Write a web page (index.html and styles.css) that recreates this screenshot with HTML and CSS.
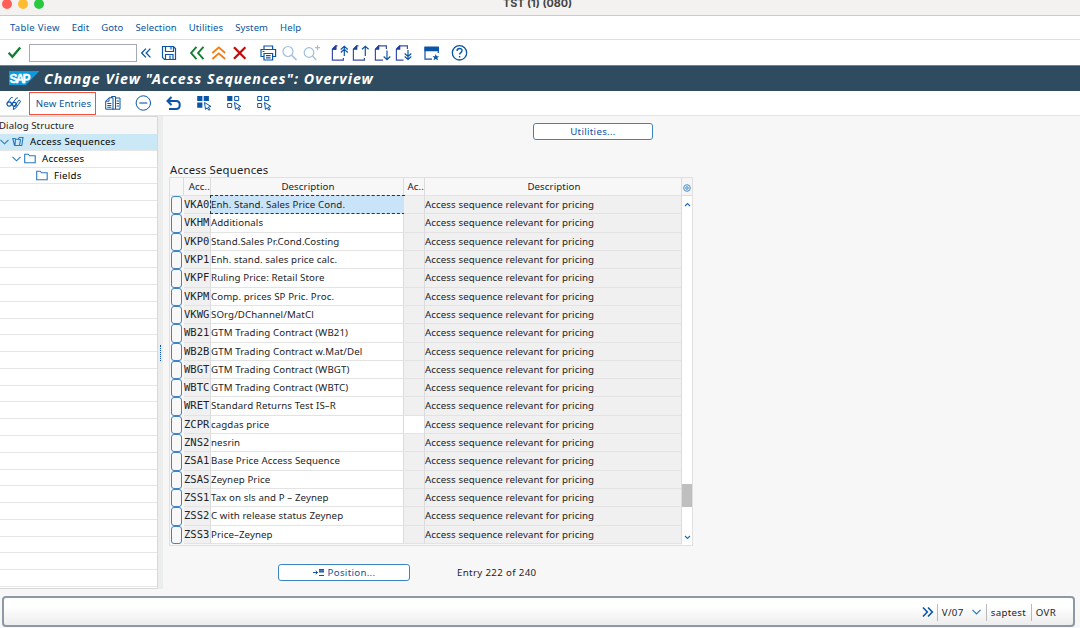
FILE: index.html
```html
<!DOCTYPE html>
<html lang="en">

<head>
    <meta charset="utf-8">
    <meta name="viewport" content="width=device-width, initial-scale=1.0">
    <title>TST (1) (080)</title>
    <link rel="stylesheet" href="styles.css">
</head>

<body>

    <header class="titlebar">
        <div class="lights"><span class="red"></span><span class="yellow"></span><span class="green"></span></div>
        <p>TST (1) (080)</p>
    </header>

    <nav class="menu">
        <a>Table View</a>
        <a>Edit</a>
        <a>Goto</a>
        <a>Selection</a>
        <a>Utilities</a>
        <a>System</a>
        <a>Help</a>
    </nav>

    <div class="toolbar">
        <svg class="enter" width="14" height="20" viewBox="0 0 14 20"><path d="M.6 9.800l3.800 4L12.200 4.400" stroke="#107e2e" stroke-width="2.3" /></svg>
        <input class="command" type="text">
        <svg class="collapse" width="12" height="20" viewBox="0 0 12 20"><path d="M4.900 5.600L.7 10l4.200 4.400M9.400 5.600L5.200 10l4.200 4.400" stroke-width="1.3" /></svg>
        <svg class="save" width="16" height="20" viewBox="0 0 16 20"><path d="M1.500 3.500h11l2 2v11h-11l-2-2zM4.500 3.500v5h8v-5M4.500 16.5v-5h7.500v5M9 12.5v4M10 3.500v3" stroke-width="1.2" /></svg>
        <div class="group">
            <svg viewBox="0 0 21.6 20"><path d="M9.500 3.800L4.100 10l5.400 6.200M16.500 3.800L11.100 10l5.400 6.200" stroke="#107e2e" stroke-width="1.9" /></svg>
            <svg viewBox="0 0 21.6 20"><path d="M3.400 10l6.400-5.600 6.400 5.600M3.400 16l6.400-5.600 6.400 5.600" stroke="#f57c14" stroke-width="1.9" /></svg>
            <svg viewBox="0 0 21.6 20"><path d="M4 4.200l11.400 11.600M15.400 4.200L4 15.800" stroke="#c40a0a" stroke-width="2.3" /></svg>
        </div>
        <div class="group">
            <svg viewBox="0 0 21.6 20"><path d="M6 6.500V3h8.600v3.500M5.800 13.500H3v-7h14.600v7h-2.800M6 10.500h8.600v6.500H6zM8 12.700h4.600M8 14.800h4.600M4.500 8.500h2" stroke-width="1.2" /></svg>
            <svg class="faded" viewBox="0 0 21.6 20"><circle cx="9" cy="8.500" r="5" /><path d="M12.700 12.200l4.800 4.800" stroke-width="1.6" /></svg>
            <svg class="faded" viewBox="0 0 21.6 20"><circle cx="8" cy="9.500" r="4.800" /><path d="M11.500 13l3.800 4M14 4.700h5M16.500 2.200v5" /></svg>
        </div>
        <div class="group pages">
            <svg viewBox="0 0 21.6 20"><path class="page" d="M8.500 2.800H6.800L3.400 6.200v11h11V15M3.400 6.200h3.400V2.800" /><path class="corner" d="M3 6.700V6l3.500-3.700h.8v4.400z" /><path d="M15.300 13V3.400M11.800 6.500l3.500-3.100 3.500 3.100M11.800 9.500l3.500-3.100 3.500 3.100" /></svg>
            <svg viewBox="0 0 21.6 20"><path class="page" d="M8.500 2.800H6.800L3.400 6.200v11h11V15" /><path class="corner" d="M3 6.700V6l3.500-3.700h.8v4.400z" /><path d="M15.300 13V3.200M12 6.300l3.300-3.100 3.300 3.100" /></svg>
            <svg viewBox="0 0 21.6 20"><path class="page" d="M11 17.200H3.400v-11l3.400-3.400h7.600V6" /><path class="corner" d="M3 6.700V6l3.500-3.700h.8v4.400z" /><path d="M15 7.500v9.200M11.700 13.500l3.300 3.200 3.300-3.200" /></svg>
            <svg viewBox="0 0 21.6 20"><path class="page" d="M10.500 17.200H3.400v-11l3.400-3.400h7.600V6" /><path class="corner" d="M3 6.700V6l3.500-3.700h.8v4.400z" /><path d="M15 7v9.500M11.700 10.500l3.300 3 3.300-3M11.700 13.500l3.300 3 3.300-3" /></svg>
        </div>
        <div class="group">
            <svg viewBox="0 0 21.6 20"><path d="M11 16.200H4V4.500h13.300V10" /><path class="solid" d="M3.500 3.500h14.300v4.700H3.500zM14.800 11l.9 2.200h2.500l-1.900 1.600.8 2.500-2.300-1.400-2.300 1.400.8-2.500-1.900-1.600h2.500z" /></svg>
        </div>
        <div class="group">
            <svg viewBox="0 0 21.6 20"><circle cx="10.500" cy="9.800" r="7.200" stroke-width="1.3" /><path d="M8.100 8c0-3.200 5-3.200 5-.4 0 2-2.500 2-2.500 4M10.600 13v1.500" stroke-width="1.4" /></svg>
        </div>
    </div>

    <div class="heading">
        <svg class="logo" width="31" height="15" viewBox="0 0 31 15">
            <path d="M0 0h30.500L17 14H0z" fill="#0a9ae0" stroke="none" />
            <text x="0.500" y="11.500" textLength="21">SAP</text>
        </svg>
        <h1>Change View "Access Sequences": Overview</h1>
    </div>

    <div class="actions">
        <svg class="display" width="18" height="20" viewBox="0 0 18 20"><circle cx="3.200" cy="11" r="2.200" /><circle cx="8.300" cy="11.300" r="2" /><path d="M1.200 10l4-5.500h1.500M6.800 9.800L10.500 5h1.500M7.200 16.500l.6-2.500 5.200-7 1.700 1.300-5.200 7z" stroke-width="1" /></svg>
        <button class="new">New Entries</button>
        <div class="icons">
            <svg viewBox="0 0 20 20"><path d="M8.500 4.800V3.500h4v12.700h-3M2.700 8.200l3.300-3.400h4v11.400H2.700zM2.700 8.200H6V4.800M4.300 10.500h4M4.300 12.500h4M4.300 14.300h4M12.500 5h4.500v11.200h-4.500M13.500 8h2.500M13.500 10.500h2.500M13.500 13h2.500" /></svg>
            <svg viewBox="0 0 20 20"><circle cx="10.300" cy="10" r="7.200" stroke-width="1" /><path d="M6.300 10h8" stroke-width="1.1" /></svg>
            <svg viewBox="0 0 20 20"><path d="M8.500 4L4.500 8l4 4M4.500 8H13c5 0 5 8 0 8H6" stroke-width="2" /></svg>
            <svg viewBox="0 0 20 20"><path class="solid" d="M3.200 3h5.200v5H3.200zM9.700 3h5.200v5H9.700zM3.200 9.500h5.200v5.200H3.200z" /><path d="M10.500 9.500l6.500 4-2.700.6 1.700 2.500-1.300.6-1.500-2.500-1.700 1.600z" /></svg>
            <svg viewBox="0 0 20 20"><path class="solid" d="M3.200 3h5.200v5H3.200z" /><path d="M10.700 3.500h4v4h-4zM3.700 10.500h4v4h-4zM10.500 9.500l6.500 4-2.700.6 1.700 2.500-1.300.6-1.500-2.500-1.700 1.600z" /></svg>
            <svg viewBox="0 0 20 20"><path d="M3.700 3.500h4v4h-4zM10.700 3.500h4v4h-4zM3.700 10.500h4v4h-4zM10.500 9.500l6.500 4-2.700.6 1.700 2.500-1.300.6-1.500-2.500-1.700 1.600z" /></svg>
        </div>
    </div>

    <div class="content">
        <aside class="tree">
            <h2>Dialog Structure</h2>
            <div id="nodes">
                <div class="node selected">
                    <svg width="9" height="6" viewBox="0 0 9 6"><path d="M.5.8l4 4 4-4" /></svg>
                    <svg class="folder" width="12" height="11" viewBox="0 0 12 11"><path d="M2.500 9.500L.8 2.500h2.800M3 9.500h6.800l1.200-8H7.500L6 3.200H3.500zM6 3.200l2.500.5-1 5.500" /></svg>
                    <span>Access Sequences</span>
                </div>
                <div class="node level2">
                    <svg width="9" height="6" viewBox="0 0 9 6"><path d="M.5.8l4 4 4-4" /></svg>
                    <svg class="folder" width="12" height="11" viewBox="0 0 12 11"><path d="M.7 9.800V1.200h3.500l1.500 1.600h5.500v7z" /></svg>
                    <span>Accesses</span>
                </div>
                <div class="node level3">
                    <svg class="folder" width="12" height="11" viewBox="0 0 12 11"><path d="M.7 9.800V1.200h3.500l1.500 1.600h5.500v7z" /></svg>
                    <span>Fields</span>
                </div>
            </div>
        </aside>

        <div class="splitter"></div>

        <main>
            <button class="btn utilities">Utilities...</button>
            <h2>Access Sequences</h2>

            <div class="table">
                <div class="grid">
                    <div class="row head">
                        <span></span><span class="short">Acc..</span><span>Description</span><span class="short">Ac..</span><span>Description</span>
                    </div>
                    <div id="liste"></div>
                </div>
                <div class="scroll">
                    <div class="settings"><svg width="8" height="8" viewBox="0 0 8 8"><circle cx="4" cy="4" r="3.300" stroke-width=".8" /><circle cx="4" cy="4" r="1.300" stroke-width=".8" /></svg></div>
                    <svg class="up" width="7" height="5" viewBox="0 0 7 5"><path d="M1 4l2.500-2.500L6 4" /></svg>
                    <div class="thumb"></div>
                    <svg class="down" width="7" height="5" viewBox="0 0 7 5"><path d="M1 1l2.500 2.500L6 1" /></svg>
                </div>
            </div>

            <div class="below">
                <button class="btn position"><svg width="12" height="9" viewBox="0 0 12 9"><path d="M0 4.500h4.500M2.700 2.700l1.900 1.800-1.900 1.800M6 1.500h5M6 4h5M6 7.500h5" stroke-width="1" /><path d="M6 3h5" stroke-width="1.5" /></svg>Position...</button>
                <p>Entry 222 of 240</p>
            </div>
        </main>
    </div>

    <footer class="status">
        <svg class="more" width="12" height="12" viewBox="0 0 12 12"><path d="M1 1.500L5.300 6 1 10.500M6 1.500L10.300 6 6 10.500" stroke-width="1.6" /></svg>
        <span class="tcode">V/07<svg width="9" height="6" viewBox="0 0 9 6"><path d="M.5.8l4 4 4-4" /></svg></span>
        <span class="host">saptest</span>
        <span class="mode">OVR</span>
    </footer>

    <script>
        const sequences = [
            ["VKA0", "Enh. Stand. Sales Price Cond."],
            ["VKHM", "Additionals"],
            ["VKP0", "Stand.Sales Pr.Cond.Costing"],
            ["VKP1", "Enh. stand. sales price calc."],
            ["VKPF", "Ruling Price: Retail Store"],
            ["VKPM", "Comp. prices SP Pric. Proc."],
            ["VKWG", "SOrg/DChannel/MatCl"],
            ["WB21", "GTM Trading Contract (WB21)"],
            ["WB2B", "GTM Trading Contract w.Mat/Del"],
            ["WBGT", "GTM Trading Contract (WBGT)"],
            ["WBTC", "GTM Trading Contract (WBTC)"],
            ["WRET", "Standard Returns Test IS–R"],
            ["ZCPR", "cagdas price"],
            ["ZNS2", "nesrin"],
            ["ZSA1", "Base Price Access Sequence"],
            ["ZSAS", "Zeynep Price"],
            ["ZSS1", "Tax on sls and P – Zeynep"],
            ["ZSS2", "C with release status Zeynep"],
            ["ZSS3", "Price–Zeynep"]
        ];

        const liste = document.querySelector("#liste");
        sequences.forEach(([code, text], i) => {
            // only ZCPR has an open accesses field
            const open = code == "ZCPR" ? " open" : "";
            const active = i == 0 ? " active" : "";
            liste.innerHTML += `
<div class="row">
<i class="pick"></i>
<span class="code">${code}</span>
<span class="text${active}">${text}</span>
<span class="ac${open}"></span>
<span class="relevant">Access sequence relevant for pricing</span>
</div>`;
        });

        // empty lines that fill the rest of the tree
        const nodes = document.querySelector("#nodes");
        for (let i = 0; i < 24; i++) {
            nodes.innerHTML += `<div class="node"></div>`;
        }
    </script>
</body>

</html>
```
FILE: styles.css
```css
* {
    box-sizing: border-box;
    margin: 0;
    padding: 0;
}

body {
    width: 1080px;
    height: 628px;
    overflow: hidden;
    display: flex;
    flex-direction: column;
    background-color: #f7f7f7;
    color: #1d2327;
    font-family: "Noto Sans", sans-serif;
    font-size: 9.7px;
    letter-spacing: .1px;
}

svg {
    display: block;
    flex: none;
    fill: none;
    stroke: #0b55a8;
    stroke-width: 1.2;
}

.solid {
    fill: #0854a6;
    stroke: none;
}

.faded {
    stroke: #9dbfdf;
}

button {
    font: inherit;
    letter-spacing: inherit;
    color: #0854a0;
}

.titlebar {
    height: 16px;
    flex: none;
    display: flex;
    background-color: #f3f2f0;
    border-bottom: 1px solid #cbcac8;
}

.titlebar p {
    margin-left: 459px;
    margin-top: -3px;
    color: #444;
    font: bold 10.8px/14px Inter, sans-serif;
    letter-spacing: 0;
}

.lights {
    display: flex;
    gap: 6px;
    margin: -1px 0 0 2px;
}

.lights span {
    width: 10px;
    height: 10px;
    border-radius: 50%;
}

.red {
    background-color: #ff5f57;
}

.yellow {
    background-color: #febc2e;
}

.green {
    background-color: #28c840;
}

.menu {
    height: 24px;
    flex: none;
    display: flex;
    align-items: center;
    gap: 12px;
    padding-left: 10px;
    background-color: #fff;
    border-bottom: 1px solid #dedede;
    color: #0854a0;
    font-size: 9.5px;
}

.menu a:first-child {
    letter-spacing: .3px;
}

.toolbar {
    height: 25px;
    flex: none;
    display: flex;
    align-items: center;
    padding-left: 8px;
    background-color: #fff;
}

.command {
    width: 108px;
    height: 18px;
    margin: 0 4px 0 7px;
    border: 1px solid #a2abb3;
}

.save {
    margin-left: 8px;
}

.group {
    display: flex;
    margin-left: 6px;
}

.save + .group {
    margin-left: 10px;
}

.group svg {
    width: 21.6px;
    height: 20px;
}

.page {
    stroke: #3a4fa8;
}

.corner {
    fill: #1c3f9c;
    stroke: none;
}

.heading {
    height: 26px;
    flex: none;
    display: flex;
    align-items: center;
    padding-left: 9px;
    background-color: #2f4b60;
    border-top: 1px solid #68898f;
}

.logo text {
    font: bold 12px "Liberation Sans", sans-serif;
    letter-spacing: 0;
    fill: #fff;
    stroke: #fff;
    stroke-width: .4;
}

.heading h1 {
    margin-left: 4px;
    color: #fff;
    font: italic bold 14.2px "Noto Sans", sans-serif;
    letter-spacing: 1.02px;
}

.actions {
    height: 25px;
    flex: none;
    display: flex;
    align-items: center;
    padding-left: 6px;
    background-color: #fff;
    border-bottom: 1px solid #e4e4e4;
}

.new {
    width: 67px;
    height: 23px;
    margin-left: 5px;
    padding-left: 2px;
    background-color: #fff;
    border: 1.5px solid #f4523b;
    white-space: nowrap;
}

.icons {
    display: flex;
    margin-left: 2px;
}

.icons svg {
    width: 20px;
    height: 20px;
    margin: 0 5.1px;
    stroke-width: 1;
}

.content {
    height: 473px;
    flex: none;
    display: flex;
}

.tree {
    width: 158px;
    height: 473px;
    background-color: #fff;
    border: solid #d8d8d8;
    border-width: 1px 1px 1px 0;
    overflow: hidden;
}

.tree h2 {
    height: 17px;
    margin-left: -1px;
    background-color: #f7f7f7;
    font-size: 9.6px;
    font-weight: normal;
    line-height: 18px;
}

#nodes {
    height: 453px;
    display: grid;
    grid-template-rows: repeat(27, 1fr);
}

.node {
    display: flex;
    align-items: center;
    min-height: 0;
    border-bottom: 1px solid #e6e6e6;
    color: #000;
    line-height: 14px;
    letter-spacing: .25px;
}

.node span {
    margin-top: 1px;
}

.node svg {
    stroke: #2b78bd;
    stroke-width: 1.1;
}

.node .folder {
    margin: 0 6px 0 3px;
}

.selected {
    background-color: #cbe8f6;
}

.level2 {
    padding-left: 12px;
}

.level3 {
    padding-left: 33px;
}

.splitter {
    width: 5px;
    background-color: #eceeee;
    display: flex;
    align-items: center;
}

.splitter::after {
    content: "";
    height: 16px;
    margin-left: 2px;
    border-left: 1px dotted #0a4fc0;
}

main {
    flex: 1;
    padding: 7px 0 0 7px;
}

.btn {
    display: flex;
    align-items: center;
    justify-content: center;
    height: 17px;
    background-color: #fff;
    border: 1px solid #3f84c2;
    border-radius: 3px;
    letter-spacing: .3px;
}

.utilities {
    width: 120px;
    margin-left: 363px;
}

main h2 {
    margin-top: 22px;
    height: 15px;
    font-size: 11.3px;
    font-weight: normal;
    line-height: 16px;
    letter-spacing: .2px;
}

.table {
    width: 524px;
    height: 369px;
    margin-left: -1px;
    display: flex;
    border: 1px solid #e0e0e0;
}

.grid {
    width: 512px;
}

.row {
    display: grid;
    grid-template-columns: 14px 27px 193px 21px 257px;
    min-height: 0;
    white-space: nowrap;
}

.row span {
    border-right: 1px solid #dcdcdc;
    border-bottom: 1px solid #e3e3e3;
    min-width: 0;
    line-height: 17px;
}

.head {
    height: 18px;
    text-align: center;
}

.head .short {
    text-align: right;
    overflow: hidden;
}

.head span:nth-child(3),
.head span:nth-child(5) {
    padding-left: 2px;
}

#liste {
    height: 348px;
    display: grid;
    grid-template-rows: repeat(19, 1fr);
}

.pick {
    width: 11px;
    margin-left: 1px;
    background-color: #f8f8f8;
    border: 1px solid #3f84c2;
    border-radius: 3px;
}

.row .code {
    background-color: #f0f0f0;
    font-family: "DejaVu Sans Mono", monospace;
    font-size: 10.5px;
    letter-spacing: 0;
}

.text {
    background-color: #fff;
}

.row .active {
    background-color: #c9e4f8;
    margin: -1px -1px 0 -1px;
    border: 1px dashed #333;
}

.ac,
.relevant {
    background-color: #f0f0f0;
}

.open {
    background-color: #fff;
}

.scroll {
    width: 10px;
    display: flex;
    flex-direction: column;
    align-items: center;
    background-color: #fff;
}

.scroll svg {
    stroke: #1c6fbe;
}

.settings {
    width: 10px;
    height: 18px;
    padding: 6px 1px 0;
    background-color: #f5f5f5;
    border-bottom: 1px solid #dcdcdc;
}

.up {
    margin-top: 6px;
}

.thumb {
    width: 10px;
    height: 23px;
    margin-top: 277px;
    background-color: #bfbfbf;
}

.down {
    margin-top: 28px;
}

.below {
    display: flex;
    align-items: center;
    margin: 18px 0 0 108px;
}

.position {
    width: 132px;
    gap: 3px;
}

.below p {
    margin-left: 47px;
    letter-spacing: .35px;
}

.status {
    width: 1073px;
    height: 31px;
    margin: 7px 0 0 2px;
    flex: none;
    display: flex;
    align-items: center;
    justify-content: flex-end;
    padding: 1px 17px 0 0;
    background: linear-gradient(#fff 30%, #ededed);
    border: 2px solid #8d99a4;
    border-radius: 4px;
}

.status span {
    display: flex;
    align-items: center;
    height: 17px;
    padding-left: 4px;
    border-left: 1px solid #b9b9b9;
    letter-spacing: .3px;
}

.more {
    margin-right: 3px;
}

.status .tcode {
    width: 49px;
}

.tcode svg {
    margin-left: 9px;
    stroke: #2b78bd;
}

.status .host {
    width: 45px;
}
```
